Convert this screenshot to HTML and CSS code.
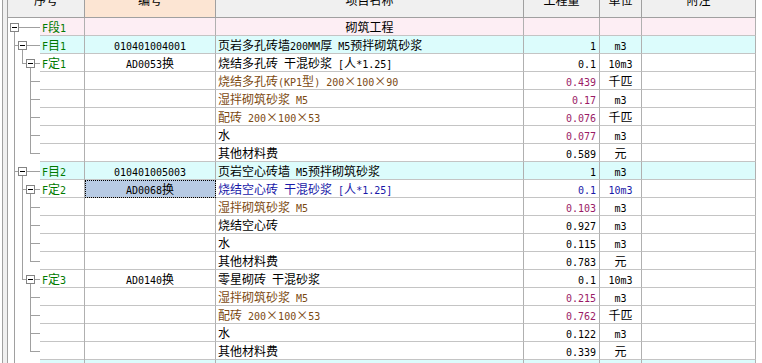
FILE: index.html
```html
<!DOCTYPE html>
<html lang="zh-CN">
<head>
    <meta charset="UTF-8">
    <meta name="viewport" content="width=device-width, initial-scale=1.0">
    <title>分部分项工程</title>
    <link rel="stylesheet" href="styles.css">
</head>
<body>
    <div class="frame">
        <div class="grid" id="grid">
            <div class="row head">
                <div class="cell"><span>序号</span></div>
                <div class="cell code"><span>编号</span></div>
                <div class="cell"><span>项目名称</span></div>
                <div class="cell"><span>工程量</span></div>
                <div class="cell"><span>单位</span></div>
                <div class="cell"><span>附注</span></div>
            </div>
        </div>
    </div>

    <script>
        // lv: 0 分部, 1 清单, 2 定额, 3 工料机
        const rows = [
            {lv: 0, tag: 'F段1', name: '砌筑工程'},
            {lv: 1, tag: 'F目1', code: '010401004001', name: '页岩多孔砖墙200MM厚 M5预拌砌筑砂浆', qty: '1', unit: 'm3'},
            {lv: 2, tag: 'F定1', code: 'AD0053换', name: '烧结多孔砖 干混砂浆 [人*1.25]', qty: '0.1', unit: '10m3'},
            {lv: 3, name: '烧结多孔砖(KP1型) 200×100×90', qty: '0.439', unit: '千匹', mat: true, chg: true},
            {lv: 3, name: '湿拌砌筑砂浆 M5', qty: '0.17', unit: 'm3', mat: true, chg: true},
            {lv: 3, name: '配砖 200×100×53', qty: '0.076', unit: '千匹', mat: true, chg: true},
            {lv: 3, name: '水', qty: '0.077', unit: 'm3', chg: true},
            {lv: 3, name: '其他材料费', qty: '0.589', unit: '元'},
            {lv: 1, tag: 'F目2', code: '010401005003', name: '页岩空心砖墙 M5预拌砌筑砂浆', qty: '1', unit: 'm3'},
            {lv: 2, tag: 'F定2', code: 'AD0068换', name: '烧结空心砖 干混砂浆 [人*1.25]', qty: '0.1', unit: '10m3', cur: true},
            {lv: 3, name: '湿拌砌筑砂浆 M5', qty: '0.103', unit: 'm3', mat: true, chg: true},
            {lv: 3, name: '烧结空心砖', qty: '0.927', unit: 'm3'},
            {lv: 3, name: '水', qty: '0.115', unit: 'm3'},
            {lv: 3, name: '其他材料费', qty: '0.783', unit: '元'},
            {lv: 2, tag: 'F定3', code: 'AD0140换', name: '零星砌砖 干混砂浆', qty: '0.1', unit: '10m3'},
            {lv: 3, name: '湿拌砌筑砂浆 M5', qty: '0.215', unit: 'm3', mat: true, chg: true},
            {lv: 3, name: '配砖 200×100×53', qty: '0.762', unit: '千匹', mat: true, chg: true},
            {lv: 3, name: '水', qty: '0.122', unit: 'm3'},
            {lv: 3, name: '其他材料费', qty: '0.339', unit: '元'},
            {lv: 1, tag: 'F目3'}
        ];

        // 半角字符用等宽小字号，和宋体的宽度一致
        function fmt(s) {
            return (s || '')
                .replace(/[\x20-\x7e]+/g, m => '<span class="a">' + m + '</span>')
                .replace(/×/g, '<span class="x">×</span>');
        }

        // 下一个层级 <= k 的行是否正好在第 k 层（即还有兄弟节点）
        function hasNext(i, k) {
            for (let j = i + 1; j < rows.length; j++) {
                if (rows[j].lv <= k) return rows[j].lv === k;
            }
            return false;
        }

        function tree(i) {
            const L = rows[i].lv;
            const vx = k => 6 + 8 * k + 0.5;
            let d = '';
            let box = '';

            for (let k = 0; k < L - 1; k++) {
                if (hasNext(i, k + 1)) d += `M${vx(k)} 0V18`;
            }
            if (L > 0) {
                d += `M${vx(L - 1)} 0V9.5`;
                if (hasNext(i, L)) d += `M${vx(L - 1)} 9.5V18`;
                d += `M${vx(L - 1)} 9.5H${L < 3 ? 2 + 8 * L : 32}`;
            }
            if (L < 3) {
                const bx = 2 + 8 * L;
                d += `M${bx + 9} 9.5H32`;
                if (rows[i + 1] && rows[i + 1].lv > L) d += `M${vx(L)} 14V18`;
                box = `<rect x="${bx + 0.5}" y="5.5" width="8" height="8" fill="#fff" stroke="#848484"/>` +
                      `<path d="M${bx + 2} 9.5H${bx + 7}" stroke="#000"/>`;
            }
            return `<svg width="32" height="18" shape-rendering="crispEdges"><path d="${d}" stroke="#a0a0a0" fill="none"/>${box}</svg>`;
        }

        const grid = document.getElementById('grid');
        rows.forEach((r, i) => {
            const row = document.createElement('div');
            row.className = 'row' + (r.lv === 0 ? ' seg' : r.lv === 1 ? ' item' : '') + (r.cur ? ' cur' : '');
            row.innerHTML =
                `<div class="cell tree">${tree(i)}<div class="tag">${fmt(r.tag)}</div></div>` +
                `<div class="cell code${r.cur ? ' picked' : ''}">${fmt(r.code)}</div>` +
                `<div class="cell name${r.lv === 0 ? ' mid' : ''}${r.mat ? ' mat' : ''}">${fmt(r.name)}</div>` +
                `<div class="cell qty${r.chg ? ' chg' : ''}">${fmt(r.qty)}</div>` +
                `<div class="cell unit">${fmt(r.unit)}</div>` +
                `<div class="cell"></div>`;
            grid.appendChild(row);
        });
    </script>
</body>
</html>
```

FILE: styles.css
```css
body {
    margin: 0;
    height: 363px;
    overflow: hidden;
    background: #fff;
    font-family: "Noto Sans CJK SC", sans-serif;
    font-size: 12px;
    color: #000;
}
.frame {
    margin-left: 2px;
    padding-left: 4px;
    border-left: 1px solid #a0a0a0;
    background: #f0f0f0;
    height: 363px;
}
.grid {
    height: 100%;
    background: #fff;
    border-left: 1px solid #a0a0a0;
}
.row {
    display: grid;
    grid-template-columns: 77px 131px 308px 76px 42px 114px;
    height: 18px;
}
.cell {
    box-sizing: border-box;
    height: 18px;
    padding: 0 2px;
    line-height: 17px;
    white-space: nowrap;
    overflow: hidden;
    border-right: 1px solid #b0b0b0;
    border-bottom: 1px solid #c4c4c4;
}
.a {
    font-family: "DejaVu Sans Mono", monospace;
    font-size: 10px;
}
.x {
    display: inline-block;
    width: 12px;
    text-align: center;
}

/* 表头 */
.head .cell {
    background: #f0f0f0;
    border-color: #a0a0a0;
    text-align: center;
}
.head .cell span {
    display: block;
    margin-top: -9px;
}
.head .code {
    background: #fce5d3;
}

/* 行底色 */
.seg .cell {
    background: #fdeef4;
}
.item .cell {
    background: #dcfcfc;
}

/* 树形列 */
.tree {
    display: flex;
    padding: 0;
    border-bottom: none;
}
.tree svg {
    flex: none;
    display: block;
    background: #fff;
}
.tag {
    flex: 1;
    padding-left: 2px;
    color: #007a00;
    border-bottom: 1px solid #c4c4c4;
}

.code {
    text-align: center;
}
.name.mid {
    text-align: center;
}
.qty {
    text-align: right;
    padding-right: 3px;
}
.unit {
    text-align: center;
}

.mat {
    color: #7c4a12;
}
.chg {
    color: #9a1a66;
}
.cur .name, .cur .qty, .cur .unit {
    color: #1818a8;
}
.picked {
    background: #b8cbe4;
    outline: 1px dotted #000;
    outline-offset: -1px;
}
```
